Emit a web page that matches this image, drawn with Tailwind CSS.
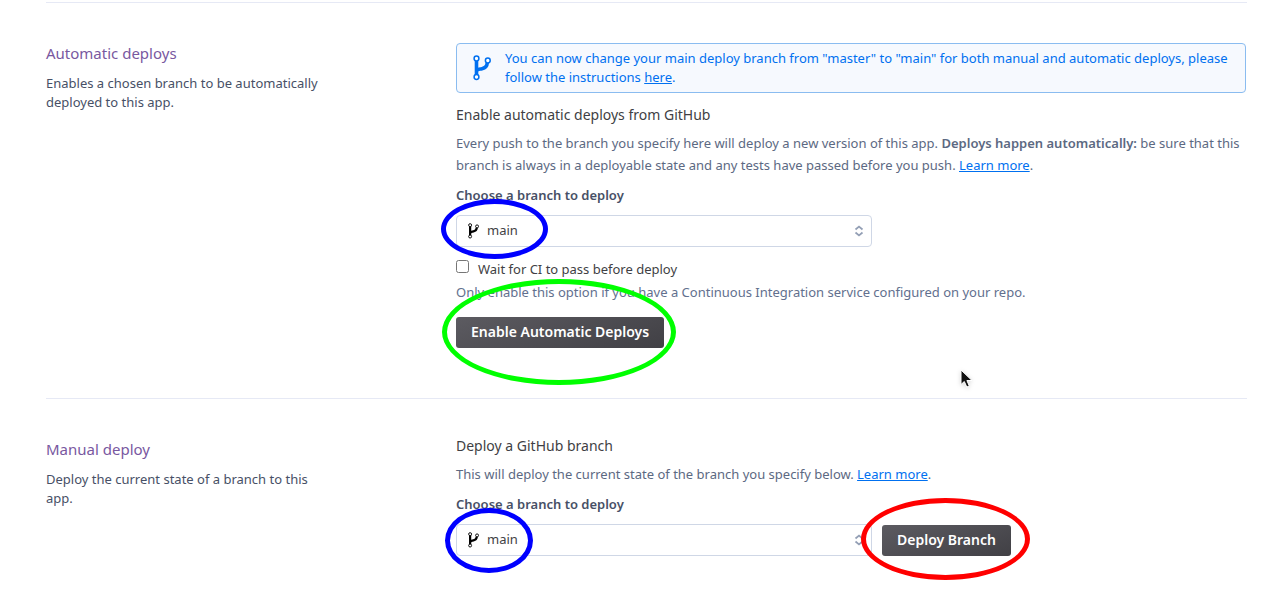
<!DOCTYPE html>
<html lang="en">
<head>
<meta charset="utf-8">
<title>Deploy</title>
<script src="https://cdn.jsdelivr.net/npm/@tailwindcss/browser@4"></script>
</head>
<body class="relative min-h-screen overflow-x-hidden bg-white font-['Noto_Sans','Open_Sans',sans-serif] text-[13px] text-[#3f3f44]">
<svg class="hidden">
  <symbol id="branch" viewBox="0 0 20 26">
    <path d="M4.500 5v16M4.500 17.500c0-3.500 2-3 5.500-3.800q5-1 5.300-6" fill="none" stroke="currentColor" stroke-width="3.600"/>
    <g fill="white" stroke="currentColor" stroke-width="1.500"><circle cx="4.500" cy="3.500" r="2.400"/><circle cx="15.800" cy="5.500" r="2.400"/><circle cx="4.500" cy="22" r="2.400"/></g>
  </symbol>
  <symbol id="carets" viewBox="0 0 10 12">
    <path d="M1.500 4.500 5 1.500 8.500 4.500M1.500 7.500 5 10.500 8.500 7.500" fill="none" stroke="currentColor" stroke-width="1.700"/>
  </symbol>
</svg>
<main class="ml-[46px] mr-[25px] pt-[2px]">
  <section class="flex border-t border-[#e6e9f5] pt-[37px] pb-[50px]">
    <div class="w-[410px] shrink-0 pt-[3px] pr-32">
      <h2 class="text-[15px] leading-5 text-[#79589f]">Automatic deploys</h2>
      <p class="mt-[11px] leading-[19px] text-[#475066]">Enables a chosen branch to be automatically deployed to this app.</p>
    </div>
    <div class="min-w-0 flex-1">
      <div class="mt-[3px] mr-px flex items-center rounded-[4px] border border-[#8abcf0] bg-[#f6f9fe] py-[5px] pl-[15px] pr-2 text-[#0070f0]">
        <svg class="mr-[13px] h-[26px] w-5 shrink-0"><use href="#branch"/></svg>
        <p class="leading-[19px]">You can now change your main deploy branch from "master" to "main" for both manual and automatic deploys, please follow the instructions <a href="#" class="underline">here</a>.</p>
      </div>
      <h3 class="mt-3 text-sm leading-5">Enable automatic deploys from GitHub</h3>
      <p class="mt-[7px] leading-[22px] text-[#5c6982]">Every push to the branch you specify here will deploy a new version of this app. <strong class="font-semibold">Deploys happen automatically:</strong> be sure that this branch is always in a deployable state and any tests have passed before you push. <a href="#" class="text-[#0070f0] underline">Learn more</a>.</p>
      <label for="auto" class="mt-[9px] block leading-5 font-semibold text-[#475066]">Choose a branch to deploy</label>
      <div class="relative mt-[10px] w-[416px]">
        <select id="auto" class="block h-8 w-full appearance-none rounded-[4px] border border-[#cfd7e6] bg-white pl-[30px]"><option>main</option></select>
        <svg class="pointer-events-none absolute left-[11px] top-2 h-4 w-[13px] text-black"><use href="#branch"/></svg>
        <svg class="pointer-events-none absolute right-2 top-[10px] h-3 w-[10px] text-[#939fb5]"><use href="#carets"/></svg>
      </div>
      <div class="mt-3 flex items-start">
        <input id="ci" type="checkbox" class="mt-px mr-[9px] size-[13px]">
        <label for="ci" class="leading-5">Wait for CI to pass before deploy</label>
      </div>
      <p class="mt-[3px] leading-5 text-[#62708e]">Only enable this option if you have a Continuous Integration service configured on your repo.</p>
      <button class="mt-[15px] block h-[31px] rounded-[3px] bg-linear-160 from-[#5c5b61] to-[#414045] px-[15px] pb-[2px] text-sm font-semibold text-white">Enable Automatic Deploys</button>
    </div>
  </section>
  <section class="flex border-t border-[#e6e9f5] pt-[37px]">
    <div class="w-[410px] shrink-0 pt-[3px] pr-32">
      <h2 class="text-[15px] leading-5 text-[#79589f]">Manual deploy</h2>
      <p class="mt-[11px] leading-[19px] text-[#475066]">Deploy the current state of a branch to this app.</p>
    </div>
    <div class="min-w-0 flex-1">
      <h3 class="text-sm leading-5">Deploy a GitHub branch</h3>
      <p class="mt-[7px] leading-[22px] text-[#5c6982]">This will deploy the current state of the branch you specify below. <a href="#" class="text-[#0070f0] underline">Learn more</a>.</p>
      <label for="manual" class="mt-[9px] block leading-5 font-semibold text-[#475066]">Choose a branch to deploy</label>
      <div class="mt-[10px] flex items-end gap-[10px]">
        <div class="relative w-[416px]">
          <select id="manual" class="block h-8 w-full appearance-none rounded-[4px] border border-[#cfd7e6] bg-white pl-[30px]"><option>main</option></select>
          <svg class="pointer-events-none absolute left-[11px] top-2 h-4 w-[13px] text-black"><use href="#branch"/></svg>
          <svg class="pointer-events-none absolute right-2 top-[10px] h-3 w-[10px] text-[#939fb5]"><use href="#carets"/></svg>
        </div>
        <button class="h-[31px] rounded-[3px] bg-linear-160 from-[#5c5b61] to-[#414045] px-[15px] pb-[2px] text-sm font-semibold text-white">Deploy Branch</button>
      </div>
    </div>
  </section>
</main>
<!-- Highlight rings and pointer drawn over the page -->
<div class="pointer-events-none absolute left-[441px] top-[199px] h-[60px] w-[107px] rounded-[50%] border-5 border-[#0000ff]"></div>
<div class="pointer-events-none absolute left-[442px] top-[279px] h-[106px] w-[234px] rounded-[50%] border-5 border-[#00ff00]"></div>
<div class="pointer-events-none absolute left-[445px] top-[508px] h-[65px] w-[88px] rounded-[50%] border-5 border-[#0000ff]"></div>
<div class="pointer-events-none absolute left-[861px] top-[498px] h-[82px] w-[169px] rounded-[50%] border-5 border-[#ff0000]"></div>
<svg class="pointer-events-none absolute left-[960px] top-[369px] drop-shadow-sm" width="13" height="20" viewBox="0 0 13 20"><path d="M1 1v14.500l3.300-3 2.500 5.500 2.500-1-2.400-5.500H12z" fill="#111" stroke="white"/></svg>
</body>
</html>
